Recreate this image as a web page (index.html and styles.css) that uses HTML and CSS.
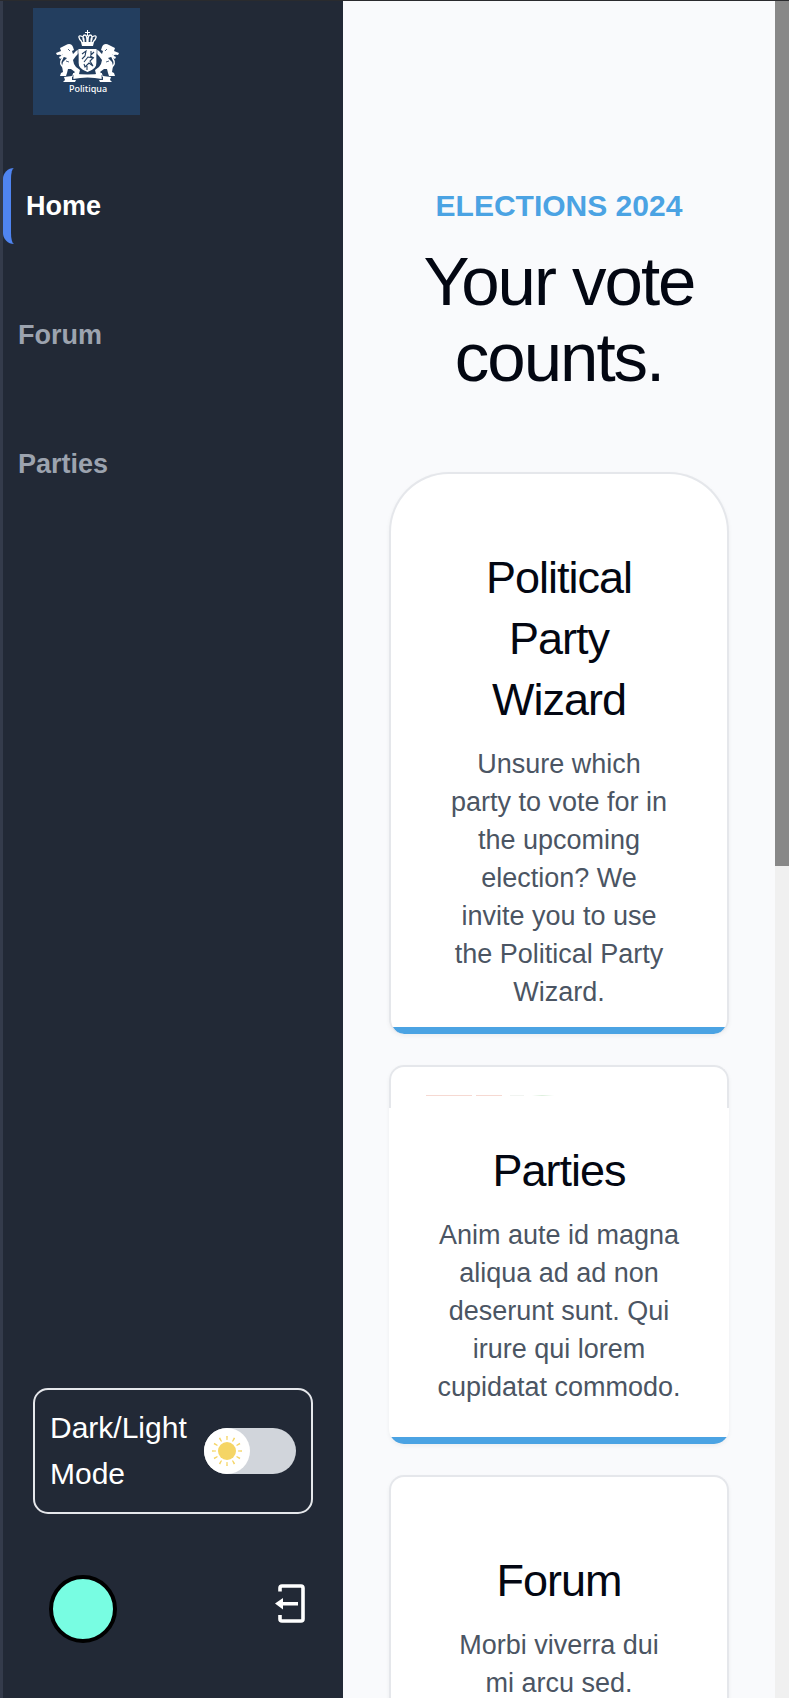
FILE: index.html
```html
<!DOCTYPE html>
<html lang="en">
<head>
<meta charset="utf-8">
<meta name="viewport" content="width=device-width, initial-scale=1">
<title>Politiqua</title>
<link rel="stylesheet" href="styles.css">
</head>
<body>
<div class="app">
  <aside class="sidebar">
    <a class="logo" href="#" aria-label="Politiqua">
      <svg viewBox="0 0 107 107" aria-hidden="true">
        <g fill="#fff">
          <path d="M54 22h1v2h2v1h-2v3h-1v-3h-2v-1h2z"/>
          <path d="M48 34h13l-1 4H49z"/>
          <path d="M33 37c3-2 6-1 7 2l1 3-2 1 1 3 3-3 3-2 1 3-4 4-3 4 1 4 2 3 4 3-1 4-4 3h-4l2-3 2-2-4-3-3 0-1 4-1 3h-6l1-3 2-1-1-6 1-4 4-4-3-1-4 2-1-2 4-2-2-1-4 1-1-2 5-2-1-3z"/>
          <path d="M76 37c-3-2-6-1-7 2l-1 3 2 1-1 3-3-3-3-2-1 3 4 4 3 4-1 4-2 3-4 3 1 4 4 3h4l-2-3-2-2 4-3 3 0 1 4 1 3h6l-1-3-2-1 1-6-1-4-4-4 3-1 4 2 1-2-4-2 2-1 4 1 1-2-5-2 1-3z"/>
          <path d="M45.500 41h18v14q0 6-9 9-9-3-9-9z"/>
          <path d="M40 65q14.500 3 29 0v6q-14.500-3-29 0zM31 69l8-1v4h4l-1 2H30l2-2zM78 69l-8-1v4h-4l1 2h12l-2-2z"/>
        </g>
        <g fill="none" stroke="#fff">
          <path d="M49 34c-4-4-4-7-1-6s3 3 3 6c-2-5-1-7 1-7s2 3 2 7M60 34c4-4 4-7 1-6s-3 3-3 6c2-5 1-7-1-7s-2 3-2 7" stroke-width="1.300"/>
          <path d="M31 60c-4-3-4-6-2-9s-1-6-5-5M78 60c4-3 4-6 2-9s1-6 5-5" stroke-width="1.500"/>
        </g>
        <g fill="none" stroke="#233e5f">
          <path d="M49 46l4-3-1 5-3 3M58 43v4l3-3M51 54l4-5 5 1-3 3 3 5-4-3-4 4-1-3M54 58v4M57 48l4 2" stroke-width="1.100"/>
          <path d="M45 41v14q0 7 9.500 10 9.500-3 9.500-10V41" stroke-width=".6"/>
          <path d="M33 53l3 1M76 53l-3 1M35 41l2 2M74 41l-2 2M40 67v5M69 67v5" stroke-width=".8"/>
        </g>
        <text class="logo-text" x="55" y="84" text-anchor="middle">Politiqua</text>
      </svg>
    </a>
    <nav class="nav">
      <a class="nav-link active" href="#" aria-current="page">Home</a>
      <a class="nav-link" href="#">Forum</a>
      <a class="nav-link" href="#">Parties</a>
    </nav>
    <label class="theme">
      <span class="theme-text">Dark/Light Mode</span>
      <input class="theme-input" type="checkbox" role="switch">
      <span class="switch">
        <span class="knob">
          <svg viewBox="-23 -23 46 46" aria-hidden="true">
            <circle r="9" fill="#f5d565"/>
            <circle class="rays" r="13" pathLength="120"/>
          </svg>
        </span>
      </span>
    </label>
    <div class="account">
      <button class="avatar" type="button" aria-label="Profile"></button>
      <button class="logout" type="button" aria-label="Log out">
        <svg viewBox="0 0 32 40" aria-hidden="true">
          <path d="M6 8.500V5q0-2 2-2h19q2 0 2 2v31q0 2-2 2H8q-2 0-2-2v-4" fill="none" stroke="#fff" stroke-width="3.600"/>
          <path d="M1 20.500l8-5.500v4h15v3.500H9v4z" fill="#fff"/>
        </svg>
      </button>
    </div>
  </aside>
  <main class="main">
    <header class="hero">
      <p class="eyebrow">ELECTIONS 2024</p>
      <h1 class="headline">Your vote counts.</h1>
    </header>
    <div class="cards">
      <article class="card wizard">
        <h2 class="card-title">Political Party Wizard</h2>
        <p class="card-text">Unsure which party to vote for in the upcoming election? We invite you to use the Political Party Wizard.</p>
      </article>
      <article class="card parties">
        <div class="media"></div>
        <div class="card-body">
          <h2 class="card-title">Parties</h2>
          <p class="card-text">Anim aute id magna aliqua ad ad non deserunt sunt. Qui irure qui lorem cupidatat commodo.</p>
        </div>
      </article>
      <article class="card">
        <h2 class="card-title">Forum</h2>
        <p class="card-text">Morbi viverra dui mi arcu sed.</p>
      </article>
    </div>
  </main>
  <div class="scrollbar" aria-hidden="true"><div class="thumb"></div></div>
</div>
</body>
</html>
```
FILE: styles.css
```css
* { box-sizing: border-box; }
body {
  margin: 0;
  font-family: "Liberation Sans", Arial, sans-serif;
  background: #f9fafc;
}
h1, h2, p { margin: 0; font-weight: 400; }
a { text-decoration: none; }
button { padding: 0; border: 0; background: none; cursor: pointer; }
svg { display: block; width: 100%; height: 100%; }

.app {
  display: grid;
  grid-template-columns: 343px 1fr 14px;
  height: 100vh;
  overflow: hidden;
  border-top: 1px solid #2a2b2e;
}

/* Sidebar */
.sidebar {
  display: flex;
  flex-direction: column;
  padding: 7px 0 55px;
  border-left: 3px solid #343b4b;
  background: #222936;
}
.logo {
  width: 107px;
  height: 107px;
  margin-left: 30px;
  background: #233e5f;
}
.logo-text { font: 500 9px "Noto Sans", sans-serif; fill: #fff; }
.nav {
  display: flex;
  flex-direction: column;
  gap: 53px;
  margin-top: 53px;
}
.nav-link {
  padding: 0 15px;
  font-size: 27px;
  font-weight: 700;
  line-height: 76px;
  color: #9ca3af;
}
.active {
  border-left: 8px solid #4f84f0;
  border-radius: 11px;
  color: #fff;
}
.theme {
  display: flex;
  align-items: center;
  justify-content: space-between;
  margin: auto 30px 61px;
  padding: 15px;
  border: 2px solid #e5e7eb;
  border-radius: 15px;
  font-size: 30px;
  line-height: 46px;
  color: #fff;
  cursor: pointer;
}
.theme-text { flex: 1; }
.theme-input { position: absolute; opacity: 0; }
.switch {
  width: 92px;
  border-radius: 23px;
  background: #d1d5db;
}
.knob {
  display: block;
  width: 46px;
  height: 46px;
  border-radius: 50%;
  background: #fff;
}
.theme-input:checked + .switch .knob { margin-left: auto; }
.rays {
  fill: none;
  stroke: #f5d565;
  stroke-width: 4;
  stroke-dasharray: 2 8;
  stroke-dashoffset: 1;
}
.account {
  display: flex;
  justify-content: space-between;
  padding: 0 37px 0 46px;
}
.avatar {
  width: 68px;
  height: 68px;
  border: 4px solid #000;
  border-radius: 50%;
  background: #78fde2;
}
.logout {
  width: 32px;
  height: 40px;
  margin-top: 8px;
}

/* Content */
.main {
  min-width: 0;
  padding: 182px 46px 0;
  overflow: hidden;
  text-align: center;
  background: #f9fafc;
}
.eyebrow {
  font-size: 30px;
  font-weight: 700;
  line-height: 46px;
  color: #4ba3e3;
}
.headline {
  margin-top: 15px;
  font-size: 69px;
  line-height: 76px;
  letter-spacing: -2px;
  color: #030712;
}
.cards {
  display: flex;
  flex-direction: column;
  gap: 31px;
  margin-top: 76px;
}
.card {
  padding: 73px 58px 16px;
  border: 2px solid #e5e7eb;
  border-bottom: 0;
  border-radius: 15px;
  background: linear-gradient(#4ba3e3, #4ba3e3) bottom / 100% 7px no-repeat border-box, #fff;
  box-shadow: 0 2px 4px rgba(0, 0, 0, .05);
}
.wizard {
  padding-bottom: 23px;
  border-radius: 60px 60px 15px 15px;
}
.parties {
  padding: 0 0 8px;
  border: 0;
}
.media {
  height: 43px;
  padding: 28px 35px 0;
  border: 2px solid #e5e7eb;
  border-bottom: 0;
  border-radius: 15px 15px 0 0;
}
.media::before {
  content: "";
  display: block;
  height: 1px;
  background: linear-gradient(90deg, #f6d9d2 0 46px, #fff 46px 50px, #f6d9d2 50px 76px, #fff 76px 84px, #f1f4f1 84px 98px, #fff 98px 106px, #dcefdc 116px, #fff 128px);
}
.card-body { padding: 32px 45px 30px; }
.card-title {
  font-size: 45px;
  line-height: 61px;
  letter-spacing: -1px;
  color: #030712;
}
.card-text {
  margin-top: 15px;
  font-size: 27px;
  line-height: 38px;
  color: #4b5563;
}

.scrollbar { background: #f0f0f0; }
.thumb { height: 51%; background: #888; }
```
